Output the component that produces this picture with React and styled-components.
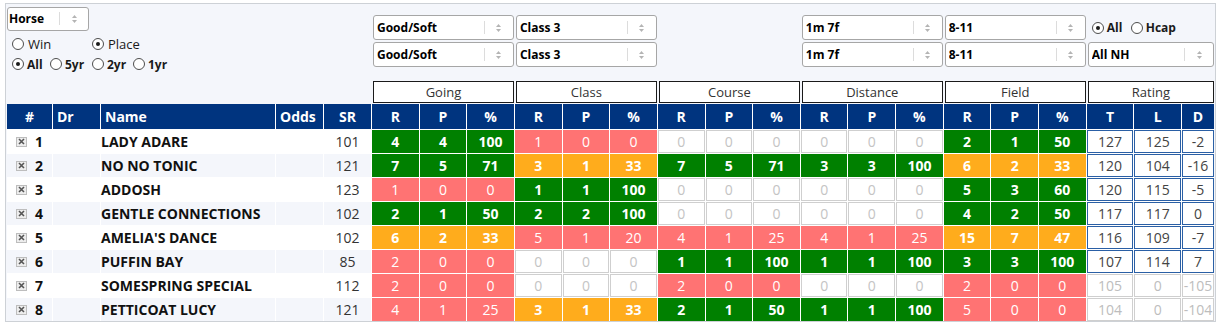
import React from 'react';
import styled, { createGlobalStyle, css } from 'styled-components';

const GlobalStyle = createGlobalStyle`
  html, body {
    margin: 0;
    padding: 0;
    background: #fff;
  }
  body {
    font-family: "Open Sans", "Liberation Sans", sans-serif;
    color: #222;
  }
`;

// shared column template for the filters and the table
const COLS = '45px 47px 174px 47px 47px repeat(17, minmax(0, 1fr)) 32px';

const rows = [
  { n: 1, name: 'LADY ADARE', sr: 101, going: [4, 4, 100, 'g'], cls: [1, 0, 0, 'r'], course: [0, 0, 0, 'e'], dist: [0, 0, 0, 'e'], field: [2, 1, 50, 'g'], t: 127, l: 125, d: -2 },
  { n: 2, name: 'NO NO TONIC', sr: 121, going: [7, 5, 71, 'g'], cls: [3, 1, 33, 'o'], course: [7, 5, 71, 'g'], dist: [3, 3, 100, 'g'], field: [6, 2, 33, 'o'], t: 120, l: 104, d: -16 },
  { n: 3, name: 'ADDOSH', sr: 123, going: [1, 0, 0, 'r'], cls: [1, 1, 100, 'g'], course: [0, 0, 0, 'e'], dist: [0, 0, 0, 'e'], field: [5, 3, 60, 'g'], t: 120, l: 115, d: -5 },
  { n: 4, name: 'GENTLE CONNECTIONS', sr: 102, going: [2, 1, 50, 'g'], cls: [2, 2, 100, 'g'], course: [0, 0, 0, 'e'], dist: [0, 0, 0, 'e'], field: [4, 2, 50, 'g'], t: 117, l: 117, d: 0 },
  { n: 5, name: "AMELIA'S DANCE", sr: 102, going: [6, 2, 33, 'o'], cls: [5, 1, 20, 'r'], course: [4, 1, 25, 'r'], dist: [4, 1, 25, 'r'], field: [15, 7, 47, 'o'], t: 116, l: 109, d: -7 },
  { n: 6, name: 'PUFFIN BAY', sr: 85, going: [2, 0, 0, 'r'], cls: [0, 0, 0, 'e'], course: [1, 1, 100, 'g'], dist: [1, 1, 100, 'g'], field: [3, 3, 100, 'g'], t: 107, l: 114, d: 7 },
  { n: 7, name: 'SOMESPRING SPECIAL', sr: 112, going: [2, 0, 0, 'r'], cls: [0, 0, 0, 'e'], course: [2, 0, 0, 'r'], dist: [0, 0, 0, 'e'], field: [2, 0, 0, 'r'], t: 105, l: 0, d: -105, off: true },
  { n: 8, name: 'PETTICOAT LUCY', sr: 121, going: [4, 1, 25, 'r'], cls: [3, 1, 33, 'o'], course: [2, 1, 50, 'g'], dist: [1, 1, 100, 'g'], field: [5, 0, 0, 'r'], t: 104, l: 0, d: -104, off: true },
];

const groups = ['Going', 'Class', 'Course', 'Distance', 'Field'];

function Select({ value, width, pad }) {
  return (
    <SelectBox $w={width} $pad={pad}>
      <SelectValue>{value}</SelectValue>
      <SelectDivider />
      <SelectArrows>
        <svg width="5" height="10" viewBox="0 0 5 10">
          <polygon points="0,4 2.5,1 5,4" fill="#b4b4b4" />
          <polygon points="0,6 2.5,9 5,6" fill="#b4b4b4" />
        </svg>
      </SelectArrows>
    </SelectBox>
  );
}

function Radio({ label, on, bold, width }) {
  return (
    <RadioLabel $bold={bold} $w={width}>
      <RadioDot $on={on} />
      {label}
    </RadioLabel>
  );
}

function StatCells({ data }) {
  const [r, p, pc, tone] = data;
  return (
    <>
      <Cell $tone={tone}>{r}</Cell>
      <Cell $tone={tone}>{p}</Cell>
      <Cell $tone={tone}>{pc}</Cell>
    </>
  );
}

function App() {
  return (
    <Page>
      <GlobalStyle />
      <Panel>
        <Filters>
          <LeftBlock>
            <Select value="Horse" width="82px" pad="1px" />
            <RadioRow $top="4px">
              <Radio label="Win" width="80px" />
              <Radio label="Place" on />
            </RadioRow>
            <RadioRow $top="1px">
              <Radio label="All" on bold width="38px" />
              <Radio label="5yr" bold width="42px" />
              <Radio label="2yr" bold width="41px" />
              <Radio label="1yr" bold />
            </RadioRow>
          </LeftBlock>
          <FilterGroup>
            <Select value="Good/Soft" />
            <Select value="Good/Soft" />
          </FilterGroup>
          <FilterGroup>
            <Select value="Class 3" />
            <Select value="Class 3" />
          </FilterGroup>
          <FilterGroup />
          <FilterGroup>
            <Select value="1m 7f" />
            <Select value="1m 7f" />
          </FilterGroup>
          <FilterGroup>
            <Select value="8-11" />
            <Select value="8-11" />
          </FilterGroup>
          <FilterGroup>
            <RadioRow $h="25px" $left="5px">
              <Radio label="All" on bold width="39px" />
              <Radio label="Hcap" bold />
            </RadioRow>
            <Select value="All NH" />
          </FilterGroup>

          <Spacer />
          {groups.map((g) => (
            <GroupHead key={g}>{g}</GroupHead>
          ))}
          <GroupHead>Rating</GroupHead>
        </Filters>

        <Table>
          <HeadRow>
            <HeadCell>#</HeadCell>
            <HeadCell $left>Dr</HeadCell>
            <HeadCell $left>Name</HeadCell>
            <HeadCell $left>Odds</HeadCell>
            <HeadCell>SR</HeadCell>
            {groups.map((g) => (
              <React.Fragment key={g}>
                <HeadCell>R</HeadCell>
                <HeadCell>P</HeadCell>
                <HeadCell>%</HeadCell>
              </React.Fragment>
            ))}
            <HeadCell>T</HeadCell>
            <HeadCell>L</HeadCell>
            <HeadCell>D</HeadCell>
          </HeadRow>

          {rows.map((row) => {
            const stripe = row.n % 2 === 0;
            const rate = row.off ? 'off' : 'rate';
            return (
              <Row key={row.n}>
                <NumCell $stripe={stripe}>
                  <RemoveBox>
                    <svg width="7" height="7" viewBox="0 0 7 7">
                      <path d="M1 1 L6 6 M6 1 L1 6" stroke="#555" strokeWidth="1.6" />
                    </svg>
                  </RemoveBox>
                  {row.n}
                </NumCell>
                <PlainCell $stripe={stripe} />
                <NameCell $stripe={stripe}>{row.name}</NameCell>
                <PlainCell $stripe={stripe} />
                <PlainCell $stripe={stripe} $center>{row.sr}</PlainCell>
                <StatCells data={row.going} />
                <StatCells data={row.cls} />
                <StatCells data={row.course} />
                <StatCells data={row.dist} />
                <StatCells data={row.field} />
                <Cell $tone={rate}>{row.t}</Cell>
                <Cell $tone={rate}>{row.l}</Cell>
                <Cell $tone={rate}>{row.d}</Cell>
              </Row>
            );
          })}
        </Table>
      </Panel>
    </Page>
  );
}

const Page = styled.div`
  padding: 3px 4px 6px 5px;
`;

const Panel = styled.div`
  width: 1211px;
  box-sizing: border-box;
  border: 1px solid #cdd1d6;
  background: #f4f6fb;
  padding: 3px 0 0 1px;
`;

const Filters = styled.div`
  display: grid;
  grid-template-columns: ${COLS};
  grid-template-rows: 67px 22px;
  column-gap: 1px;
  row-gap: 7px;
  width: 1207px;
`;

const LeftBlock = styled.div`
  grid-column: span 5;
  display: flex;
  flex-direction: column;
`;

const FilterGroup = styled.div`
  grid-column: span 3;
  display: flex;
  flex-direction: column;
  gap: 2px;
  padding-top: 8px;
`;

const Spacer = styled.div`
  grid-column: span 5;
`;

const SelectBox = styled.div`
  display: flex;
  align-items: center;
  box-sizing: border-box;
  height: 25px;
  width: ${(p) => p.$w || 'auto'};
  margin-left: ${(p) => (p.$w ? '0' : '1px')};
  border: 1px solid #a6a6a6;
  border-radius: 3px;
  background: #fff;
  font-size: 12px;
  font-weight: 700;
  color: #000;
  padding-left: ${(p) => p.$pad || '3px'};
`;

const SelectValue = styled.span`
  flex: 1;
  white-space: nowrap;
  overflow: hidden;
`;

const SelectDivider = styled.span`
  width: 1px;
  height: 13px;
  background: #dcdcdc;
`;

const SelectArrows = styled.span`
  width: 28px;
  display: flex;
  justify-content: center;
  align-items: center;
`;

const RadioRow = styled.div`
  display: flex;
  align-items: center;
  height: ${(p) => p.$h || '20px'};
  margin-top: ${(p) => p.$top || '0'};
  padding-left: ${(p) => p.$left || '5px'};
`;

const RadioLabel = styled.label`
  display: inline-flex;
  align-items: center;
  gap: ${(p) => (p.$bold ? '3px' : '4px')};
  width: ${(p) => p.$w || 'auto'};
  font-size: ${(p) => (p.$bold ? '12px' : '13px')};
  font-weight: ${(p) => (p.$bold ? 700 : 400)};
  color: #1a1a1a;
  white-space: nowrap;
`;

const RadioDot = styled.span`
  width: 12px;
  height: 12px;
  box-sizing: border-box;
  border-radius: 50%;
  border: 1px solid #4d4d4d;
  background: #fff;
  display: inline-flex;
  align-items: center;
  justify-content: center;
  &::after {
    content: '';
    width: 4px;
    height: 4px;
    border-radius: 50%;
    background: ${(p) => (p.$on ? '#1a1a1a' : 'transparent')};
  }
`;

const GroupHead = styled.div`
  grid-column: span 3;
  margin-left: 1px;
  box-sizing: border-box;
  border: 1px solid #1a1a1a;
  background: #fff;
  display: flex;
  align-items: center;
  justify-content: center;
  font-size: 13px;
  color: #333;
`;

const Table = styled.div`
  width: 1207px;
  margin-top: 1px;
  display: flex;
  flex-direction: column;
  gap: 1px;
  background: #fff;
`;

const gridRow = css`
  display: grid;
  grid-template-columns: ${COLS};
  column-gap: 1px;
  background: #fff;
`;

const HeadRow = styled.div`
  ${gridRow};
  height: 25px;
`;

const Row = styled.div`
  ${gridRow};
  height: 23px;
`;

const HeadCell = styled.div`
  background: #00347f;
  color: #fff;
  font-size: 14px;
  font-weight: 700;
  display: flex;
  align-items: center;
  justify-content: ${(p) => (p.$left ? 'flex-start' : 'center')};
  padding-left: ${(p) => (p.$left ? '4px' : '0')};
`;

const PlainCell = styled.div`
  background: ${(p) => (p.$stripe ? '#f4f6fb' : '#fff')};
  display: flex;
  align-items: center;
  justify-content: ${(p) => (p.$center ? 'center' : 'flex-start')};
  font-size: 14px;
  color: #333;
`;

const NumCell = styled(PlainCell)`
  padding-left: 9px;
  gap: 8px;
  font-weight: 700;
  color: #111;
`;

const NameCell = styled(PlainCell)`
  font-weight: 700;
  color: #111;
  white-space: nowrap;
`;

const RemoveBox = styled.span`
  width: 11px;
  height: 10px;
  box-sizing: border-box;
  border: 1px solid #bdbdbd;
  background: #ededed;
  display: inline-flex;
  align-items: center;
  justify-content: center;
`;

const tones = {
  g: css`background: #008000; color: #fff; font-weight: 700;`,
  o: css`background: #ffac1c; color: #fff; font-weight: 700;`,
  r: css`background: #ff7373; color: #fff;`,
  e: css`background: #fff; color: #c4c4c4; box-shadow: inset 0 0 0 1px #cfcfcf;`,
  rate: css`background: #fff; color: #444; box-shadow: inset 0 0 0 1px #2a5fa5;`,
  off: css`background: #fff; color: #bdbdbd; box-shadow: inset 0 0 0 1px #cfcfcf;`,
};

const Cell = styled.div`
  display: flex;
  align-items: center;
  justify-content: center;
  font-size: 14px;
  white-space: nowrap;
  ${(p) => tones[p.$tone]};
`;

export default App;
